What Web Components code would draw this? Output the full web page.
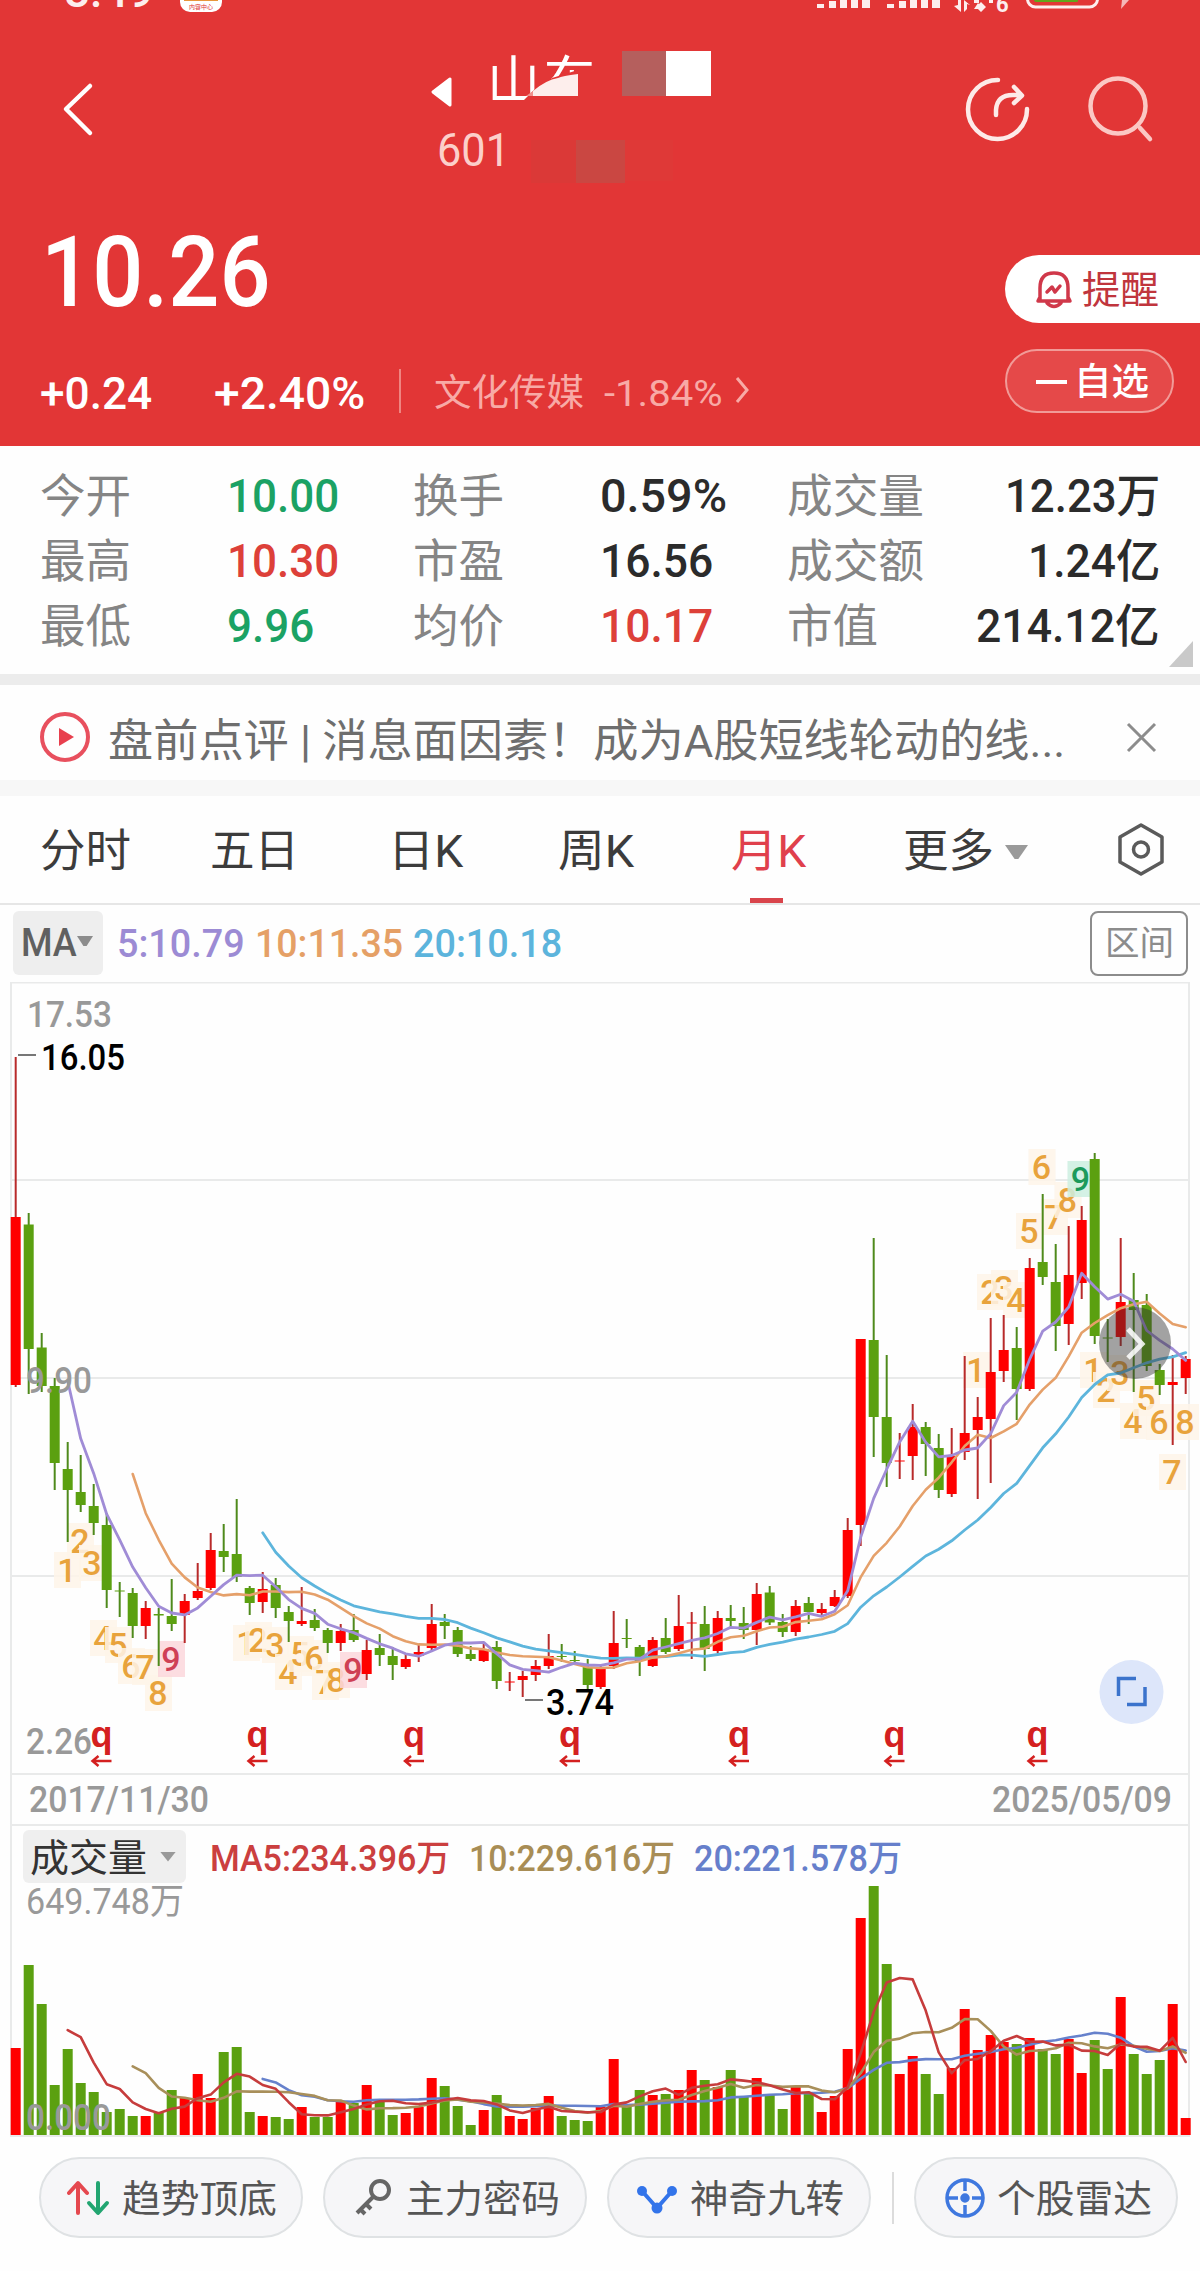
<!DOCTYPE html>
<html lang="zh-CN">
<head>
<meta charset="utf-8">
<title>个股行情</title>
<style>
  body {
    margin: 0;
    width: 1200px;
    height: 2271px;
    overflow: hidden;
    background: #fefefe;
    color: #2b2b2b;
    font-family: Roboto, "Noto Sans CJK SC", sans-serif;
  }
</style>
</head>
<body>

<quote-header>
  <fit-text slot="price" w="230">10.26</fit-text>
  <fit-text slot="change" w="112">+0.24</fit-text>
  <fit-text slot="percent" w="151">+2.40%</fit-text>
  <fit-text slot="sector" w="150">文化传媒</fit-text>
  <fit-text slot="sector-change" w="118">-1.84%</fit-text>
</quote-header>

<stat-grid>
  <fit-text w="91">今开</fit-text><fit-text w="112" class="down">10.00</fit-text>
  <fit-text w="91">换手</fit-text><fit-text w="127" class="num">0.59%</fit-text>
  <fit-text w="137">成交量</fit-text><fit-text w="155" class="num">12.23万</fit-text>
  <fit-text w="91">最高</fit-text><fit-text w="112" class="up">10.30</fit-text>
  <fit-text w="91">市盈</fit-text><fit-text w="113" class="num">16.56</fit-text>
  <fit-text w="137">成交额</fit-text><fit-text w="132" class="num">1.24亿</fit-text>
  <fit-text w="91">最低</fit-text><fit-text w="87" class="down">9.96</fit-text>
  <fit-text w="91">均价</fit-text><fit-text w="113" class="up">10.17</fit-text>
  <fit-text w="91">市值</fit-text><fit-text w="184" class="num">214.12亿</fit-text>
</stat-grid>

<news-bar><fit-text w="957">盘前点评 | 消息面因素！成为A股短线轮动的线...</fit-text></news-bar>

<period-tabs>
  <fit-text w="91">分时</fit-text>
  <fit-text w="89">五日</fit-text>
  <fit-text w="75">日K</fit-text>
  <fit-text w="76">周K</fit-text>
  <fit-text w="75" class="active">月K</fit-text>
  <fit-text w="91">更多</fit-text>
</period-tabs>

<ma-legend>
  <fit-text slot="name" w="56">MA</fit-text>
  <fit-text w="128" style="color:#9c8bd4">5:10.79</fit-text>
  <fit-text w="148" style="color:#e5a066">10:11.35</fit-text>
  <fit-text w="149" style="color:#5cb4dc">20:10.18</fit-text>
  <fit-text slot="range" w="69">区间</fit-text>
</ma-legend>

<kline-chart start="2017/11/30" end="2025/05/09"></kline-chart>

<volume-chart>
  <fit-text slot="name" w="117">成交量</fit-text>
  <fit-text w="240" style="color:#cb3f3f">MA5:234.396万</fit-text>
  <fit-text w="206" style="color:#a88d55">10:229.616万</fit-text>
  <fit-text w="208" style="color:#667fcb">20:221.578万</fit-text>
</volume-chart>

<tool-row>
  <tool-chip icon="trend"><fit-text w="155">趋势顶底</fit-text></tool-chip>
  <tool-chip icon="key"><fit-text w="154">主力密码</fit-text></tool-chip>
  <tool-chip icon="nodes"><fit-text w="154">神奇九转</fit-text></tool-chip>
  <tool-chip icon="radar" slot="pinned"><fit-text w="155">个股雷达</fit-text></tool-chip>
</tool-row>

<script>
function define(name, html, setup) {
  const template = document.createElement("template");
  template.innerHTML = html;
  customElements.define(name, class extends HTMLElement {
    constructor() {
      super();
      this.attachShadow({ mode: "open" });
      this.shadowRoot.appendChild(template.content.cloneNode(true));
    }
    connectedCallback() {
      if (setup) setup(this, this.shadowRoot);
    }
  });
}

/* one row per month: up/down, high, body top, body bottom, low, volume top (canvas y) */
const months = [
  ["r",1057,1217,1385,1387,2048],["g",1213,1224.5,1349,1394,1965],["g",1333,1347.5,1386,1392,2004],
  ["g",1378,1386,1463,1490,2085],["g",1442,1469,1490,1542,2049],["g",1455,1492,1505,1512,2083],
  ["g",1484,1506,1523,1535,2092],["g",1513,1525,1590,1608,2112],["g",1582,1590.5,1591.5,1617,2109],
  ["g",1588,1593,1626,1638,2116],["r",1601,1608,1626,1639,2116],["g",1608,1614,1615.5,1666,2113],
  ["g",1579,1616,1624,1631,2090],["r",1594,1601,1615,1643,2098],["r",1563,1591,1598,1600,2074],
  ["r",1533,1550,1588,1590,2098],["g",1524,1551,1557,1572,2052],["g",1499,1554,1577,1582,2047],
  ["g",1586,1588,1603,1615,2112],["r",1572,1589,1602,1613,2116],["g",1578,1585,1608,1618,2117],
  ["g",1606,1612,1621,1642,2119],["r",1587,1621,1624,1626,2107],["g",1609,1620,1628,1631,2117],
  ["g",1628,1630,1643,1653,2117],["r",1624,1631,1643,1651,2101],["g",1614,1630,1640,1642,2103],
  ["r",1640,1650,1674,1680,2085],["g",1634,1648,1655,1666,2100],["g",1647,1656,1665,1680,2115],
  ["r",1653,1659,1667,1669,2113],["r",1645,1652,1656,1662,2107],["r",1604,1624,1648,1652,2078],
  ["g",1614,1622,1626,1639,2086],["g",1627,1630,1654,1657,2106],["g",1646,1654,1659,1661,2125],
  ["r",1642,1649,1661,1662,2110],["g",1641,1647,1681,1689,2095],["r",1672,1681.5,1682.5,1691,2116],
  ["r",1671,1676,1680,1697,2119],["r",1660,1666,1675,1681,2108],["r",1634,1656,1666,1669,2096],
  ["g",1644,1656,1657,1662,2116],["g",1651,1660,1661,1665,2120],["g",1659,1667,1685,1689,2121],
  ["r",1666,1668,1687,1689,2107],["r",1611,1643,1666,1669,2059],["g",1619,1638,1639,1648,2105],
  ["g",1645,1647,1661,1676,2090],["r",1637,1640,1666,1667,2095],["g",1618,1638,1652,1654,2094],
  ["r",1595,1626,1649,1651,2090],["r",1612,1622.5,1623.5,1659,2070],["g",1606,1624,1649,1671,2080],
  ["r",1611,1618,1651,1653,2087],["g",1605,1618,1621,1629,2070],["g",1607,1623,1630,1639,2096],
  ["r",1583,1594,1630,1645,2078],["g",1586,1592.5,1622.5,1625,2095],["g",1614,1622,1632,1637,2109],
  ["r",1600,1606,1632,1636,2087],["g",1597,1603,1612,1624,2092],["r",1603,1609,1613,1617,2112],
  ["r",1590,1597,1606,1607,2096],["r",1518,1530,1596,1598,2049],["r",1339,1339,1525,1546,1918],
  ["g",1238,1340,1417,1457,1885],["g",1355,1417,1463,1487,1964],["r",1433,1460.5,1461.5,1479,2074],
  ["r",1404,1427,1456,1480,2056],["g",1422,1427,1444,1476,2074],["g",1434,1448,1490,1498,2094],
  ["r",1428,1456,1494,1497,2068],["r",1356,1433,1452,1460,2009],["r",1397,1417,1430,1499,2050],
  ["r",1318,1372,1419,1483,2035],["r",1315,1350,1371,1382,2042],["g",1327,1348,1389,1420,2044],
  ["r",1258,1268,1389,1391,2038],["g",1194,1262,1277,1285,2049],["g",1244,1282,1326,1351,2054],
  ["r",1226,1275,1324,1345,2039],["r",1206,1220,1283,1299,2073],["g",1153,1159,1336,1344,2040],
  ["g",1319,1337.5,1338.5,1362,2069],["r",1238,1302,1337,1346,1997],["g",1273,1300,1310,1392,2054],
  ["g",1294,1305,1366,1371,2074],["g",1364,1370,1385,1395,2060],["r",1355,1382,1385,1445,2004],
  ["r",1356,1359,1378,1394,2118]
];

/* nine-turn counters: digit, centre x, centre y, optional highlight */
const counters = [
  [1,67,1570],[2,80,1541],[3,92,1563],[4,103,1638],[5,118,1645],[6,131,1666],[7,145,1667],[8,158,1693],[9,171,1659,"buy"],
  [1,246,1643],[2,258,1640],[3,275,1645],[4,288,1672],[5,300,1654],[6,314,1658],[7,325,1682],[8,336,1680],[9,353,1670,"buy"],
  [1,976,1370],[2,990,1292],[3,1004,1288],[4,1016,1300],[5,1029,1231],[6,1041.5,1167],[7,1054,1217],[8,1067.5,1200],[9,1080.5,1179,"sell"],
  [1,1093,1370],[2,1106,1390],[3,1120,1373],[4,1133,1421],[5,1146,1398],[6,1159,1422],[7,1172,1472],[8,1185,1422]
];

const cx = i => +(15.7 + i * 13).toFixed(1);

function average(values, n, color, width = 2.6) {
  const points = [];
  for (let i = n - 1; i < values.length; i++) {
    const sum = values.slice(i - n + 1, i + 1).reduce((a, b) => a + b, 0);
    points.push(`${cx(i)},${(sum / n).toFixed(1)}`);
  }
  return `<polyline points="${points.join(" ")}" fill="none" stroke="${color}" stroke-width="${width}" stroke-linejoin="round" stroke-linecap="round"/>`;
}

function label(text, x, baseline, width, extra = "") {
  return `<text x="${x}" y="${baseline}" textLength="${width}" lengthAdjust="spacingAndGlyphs" ${extra}>${text}</text>`;
}

define("status-bar", `
  <style>
    :host { display: block; height: 13px; }
    svg { display: block; }
  </style>
  <svg width="1200" height="13" fill="#fdeeee">
    <text x="64" y="7" font-size="46" font-weight="500" textLength="90" lengthAdjust="spacingAndGlyphs">8:49</text>
    <rect x="180" y="-28" width="42" height="40" rx="10" fill="#fff"/>
    <rect x="184" y="-6" width="34" height="7" fill="#e8963c"/>
    <text x="189" y="9" font-size="6" fill="#d33" textLength="24">内容中心</text>
    <g>
      <path d="M817 4h7v4h-7zM829 1h7v7h-7zM840 0h7v8h-7zM851 0h7v8h-7zM862 0h8v8h-8z"/>
      <path d="M887 4h7v4h-7zM899 1h7v7h-7zM910 0h7v8h-7zM921 0h7v8h-7zM932 0h8v8h-8z"/>
      <path d="M954 6l7 6V0h-3v5zM964 0v12l3-3V4l3 1zM974 0h5v3h-5zM974 9l4-6 4 5zM989 0h4v3h-4zM976 7l5-5 5 5-5 5z"/>
      <text x="996" y="12" font-size="22" font-weight="700">6</text>
    </g>
    <rect x="1027.500" y="-22" width="70" height="29" rx="8" fill="none" stroke="#fdeeee" stroke-width="3"/>
    <path d="M1034 0h44v1q0 1-2 1h-39q-3 0-3-2z" fill="#62a41b"/>
    <path d="M1121 9l8-9h-7z" opacity=".7"/>
  </svg>
`);

define("quote-header", `
  <style>
    :host { display: block; height: 446px; background: #e23636; color: #fff; overflow: hidden; }
    svg { display: block; flex: none; }
    .nav { display: grid; grid-template-columns: 420px 500px 280px; height: 187px; }
    .price { display: flex; justify-content: space-between; height: 142px; padding-left: 41px; }
    slot[name=price] { font-size: 99px; line-height: 145px; font-weight: 500; }
    .pill {
      box-sizing: border-box; display: flex; align-items: center;
      font-weight: 500; line-height: 64px;
    }
    .remind { width: 195px; height: 68px; margin-top: 55px; padding: 1px 0 0 30px; gap: 9px;
      border-radius: 34px 0 0 34px; background: #fff; color: #c0353d; font-size: 38px; font-weight: 400; }
    .change { display: flex; height: 104px; padding: 0 26px 0 40px; line-height: 51px; font-size: 45px; font-weight: 500; }
    .text { padding-top: 26px; }
    .percent { margin-left: 62px; }
    .rule { width: 2px; height: 44px; margin: 27px 33px 0 34px; background: #ef8581; }
    .sector { display: flex; gap: 20px; padding-top: 26px; color: #f8aaa6; font-size: 37px; font-weight: 400; }
    .sector svg { margin: 7px 0 0 -8px; }
    .own { width: 169px; height: 64px; margin: 7px 0 0 auto; padding-left: 29px; gap: 7px;
      border: 2px solid #f19b98; border-radius: 33px; background: #e54949; font-size: 37px; }
    .own i { width: 31px; height: 4px; margin-top: 2px; background: #fff; }
    .own fit-text { padding-top: 3px; }
  </style>
  <status-bar></status-bar>
  <div class="nav">
    <svg width="420" height="187" viewBox="0 13 420 187" fill="none" stroke="#fff" stroke-width="4.500" stroke-linecap="round" stroke-linejoin="round">
      <path d="M90 86L66 109L90 133"/>
    </svg>
    <svg width="500" height="187" viewBox="420 13 500 187">
      <path d="M433 92L450 79V105Z" fill="#fff" stroke="#fff" stroke-width="3" stroke-linejoin="round"/>
      <text x="487" y="100" font-size="53" textLength="109" fill="#fff" font-weight="400">山东</text>
      <path d="M519 105L535 89L552 78L578 70H600V112H519Z" fill="#e23636"/>
      <path d="M533 96V91Q546 80 558 78Q562 76 578 74V96Z" fill="#fdeeec"/>
      <path d="M526 96L533 91V96Z" fill="#f0908c"/>
      <rect x="622" y="51" width="45" height="45" fill="#b55f5d"/>
      <rect x="666" y="51" width="45" height="45" fill="#fff"/>
      <text x="437" y="166" font-size="47" textLength="73" lengthAdjust="spacingAndGlyphs" fill="#fccfca">601</text>
      <rect x="531" y="140" width="45" height="43" fill="#db3937"/>
      <rect x="576" y="140" width="49" height="43" fill="#ca4742"/>
      <rect x="625" y="140" width="48" height="41" fill="#df3937"/>
    </svg>
    <svg width="280" height="187" viewBox="920 13 280 187" fill="none" stroke="#fdeae8" stroke-width="4.500" stroke-linecap="round" stroke-linejoin="round">
      <path d="M998 80A29.500 29.500 0 1 0 1027 109"/>
      <path d="M996 115V110Q997 95 1013 95H1021M1014 87L1022 95.500L1014 103"/>
      <g stroke="#fbc8c4"><circle cx="1118" cy="106" r="27.500"/><path d="M1140 128L1150 139"/></g>
    </svg>
  </div>
  <div class="price">
    <slot name="price"></slot>
    <div class="pill remind">
      <svg width="38" height="40" fill="none" stroke="#d0384a" stroke-width="3.500" stroke-linejoin="round" stroke-linecap="round">
        <path d="M5 31V18Q5 3 19 3T33 18V31M3 31H35M5 27L3 31M33 27L35 31M12 33Q19 40 26 33M12 22L17 17L20 22L25 16"/>
      </svg>
      <fit-text w="77">提醒</fit-text>
    </div>
  </div>
  <div class="change">
    <div class="text"><slot name="change"></slot></div>
    <div class="text percent"><slot name="percent"></slot></div>
    <div class="rule"></div>
    <div class="sector">
      <slot name="sector"></slot><slot name="sector-change"></slot>
      <svg width="17" height="30" fill="none" stroke="#f8aaa6" stroke-width="3"><path d="M3 3L13 15L3 27"/></svg>
    </div>
    <div class="pill own"><i></i><fit-text w="75">自选</fit-text></div>
  </div>
`);

define("stat-grid", `
  <style>
    :host {
      display: grid; box-sizing: border-box; height: 239px;
      grid-template-columns: 187px 186px 187px 187px 140px 1fr; grid-auto-rows: 65px;
      padding: 18px 40px 0 40px; border-bottom: 11px solid #ececec;
      font-size: 46px; line-height: 65px; color: #858585;
    }
    ::slotted(.num) { color: #2b2b2b; }
    ::slotted(.up) { color: #dd4039; }
    ::slotted(.down) { color: #1ba264; }
    ::slotted(:nth-child(even)) { font-weight: 500; }
    ::slotted(:nth-child(6n)) { justify-self: end; }
    i { grid-column: 6; justify-self: end; width: 24px; height: 26px; margin: -18px -33px 0 0;
      background: #c9c9c9; clip-path: polygon(100% 0, 100% 100%, 0 100%); }
  </style>
  <slot></slot><i></i>
`);

define("news-bar", `
  <style>
    :host {
      display: flex; align-items: center; box-sizing: border-box; height: 111px;
      padding: 9px 43px 0 39px; border-bottom: 16px solid #f7f7f7;
      font-size: 45px; color: #6e6e6e;
    }
    slot { display: block; margin-left: 17px; }
    .close { margin-left: auto; }
  </style>
  <svg width="52" height="56"><circle cx="26" cy="28" r="23" fill="none" stroke="#e8505e" stroke-width="4"/><path d="M20 19V37L35 28Z" fill="#e8404e"/></svg>
  <slot></slot>
  <svg class="close" width="31" height="31" stroke="#8c8c8c" stroke-width="3"><path d="M2 2L29 29M29 2L2 29"/></svg>
`);

define("period-tabs", `
  <style>
    :host {
      display: grid; grid-template-columns: 170px 178px 170px 173px 172px 102px 109px 1fr; align-items: start;
      box-sizing: border-box; height: 109px; padding-left: 40px; border-bottom: 2px solid #e6e6e6;
      font-size: 45px; line-height: 112px; color: #3c3c3c;
    }
    ::slotted(.active) { color: #e0404c; height: 107px; background: linear-gradient(#d9444b, #d9444b) no-repeat 19px 102px / 33px 5px; }
    i { width: 23px; height: 14px; margin-top: 49px; background: #9a9a9a; clip-path: polygon(0 0, 100% 0, 58% 100%, 42% 100%); }
    svg { margin: 26px 0 0 2px; }
  </style>
  <slot></slot><i></i>
  <svg width="50" height="56" fill="none" stroke="#5a5a5a" stroke-width="3.500" stroke-linejoin="round">
    <path d="M25 3L46 15V40L25 52L4 40V15Z"/><circle cx="25" cy="27.500" r="7.500"/>
  </svg>
`);

define("ma-legend", `
  <style>
    :host { display: flex; align-items: center; box-sizing: border-box; height: 77px; padding: 0 12px 1px 13px; font-size: 38px; font-weight: 500; }
    .name { display: flex; align-items: center; width: 82px; height: 64px; padding-left: 8px; border-radius: 6px; background: #eee; color: #606060; }
    i { width: 16px; height: 10px; margin-top: -4px; background: #8c8c8c; clip-path: polygon(0 0, 100% 0, 60% 100%, 40% 100%); }
    .values { display: flex; gap: 10px; margin: 1px 0 0 14px; }
    .range { display: flex; align-items: center; justify-content: center; box-sizing: border-box; width: 98px; height: 65px; margin-left: auto;
      padding-bottom: 5px; border: 2px solid #8c8c8c; border-radius: 8px; color: #8c8c8c; font-size: 34px; font-weight: 400; }
  </style>
  <div class="name"><slot name="name"></slot><i></i></div>
  <div class="values"><slot></slot></div>
  <div class="range"><slot name="range"></slot></div>
`);

define("kline-chart", `
  <style>
    :host { display: block; height: 844px; }
    svg { display: block; }
    .g { fill: #5ba010; stroke: #5ba010; }
    .r { fill: #ff0000; stroke: #ff0000; }
    .wick.g { stroke: #4f8a1c; }
    .wick.r { stroke: #b82a2a; }
  </style>
  <svg width="1200" height="844" viewBox="0 982 1200 844" font-size="36" font-weight="500" fill="#999"></svg>
`, (host, root) => {
  let out = `<path d="M11 1826V982.500H1189V1826M11 1180H1189M11 1378H1189M11 1576H1189M11 1774H1189M11 1825H1189" fill="none" stroke="#e9eaea" stroke-width="2"/>`;
  for (const [n, x, y, kind] of counters) {
    const fill = kind === "buy" ? "#fcd7dc" : kind === "sell" ? "#cdeee1" : "#fef5e9";
    const color = kind === "buy" ? "#cf4055" : kind === "sell" ? "#1c9a5c" : "#e8a33c";
    out += `<rect x="${x - 13}" y="${y - 18}" width="27" height="36" fill="${fill}" opacity=".85"/>`;
    out += `<text x="${x}" y="${y + 12}" text-anchor="middle" font-size="34" fill="${color}">${n}</text>`;
  }
  months.forEach(([c, high, top, bottom, low], i) => {
    out += `<path class="wick ${c}" d="M${cx(i)} ${high}V${low}" stroke-width="2"/>`;
    out += `<rect class="${c}" x="${cx(i) - 5}" y="${top}" width="10" height="${bottom - top}" stroke-width="0"/>`;
  });
  const closes = months.map(m => m[0] === "r" ? m[2] : m[3]);
  out += average(closes, 20, "#5db5dc", 2.8) + average(closes, 10, "#e5a06a", 2.6) + average(closes, 5, "#a08cd6", 2.8);
  out += label("17.53", 27, 1027, 85) + label("9.90", 26, 1393, 66) + label("2.26", 26, 1754, 66);
  out += label("16.05", 41, 1070, 84, `fill="#000"`) + label("3.74", 546, 1715, 68, `fill="#000"`);
  out += `<path d="M18 1055H36M525 1700H543" stroke="#777" stroke-width="2"/>`;
  out += label(host.getAttribute("start"), 29, 1812, 180) + label(host.getAttribute("end"), 992, 1812, 180);
  for (const x of [101.5, 257.5, 414, 570, 739, 894.5, 1037.5]) {
    out += `<text x="${x}" y="1747" text-anchor="middle" font-family="Liberation Sans" font-weight="700" fill="#d42020">q</text>`;
    out += `<path d="M${x + 10} 1761H${x - 8}M${x - 3} 1756L${x - 9} 1761L${x - 3} 1766" fill="none" stroke="#d42020" stroke-width="2.500"/>`;
  }
  out += `<circle cx="1135" cy="1343" r="36" fill="#333" opacity=".45"/>
    <path d="M1128 1329L1142 1344L1128 1358" fill="none" stroke="#fff" stroke-width="5" opacity=".85"/>
    <circle cx="1131.500" cy="1692" r="32" fill="#dde6fa"/>
    <path d="M1118.500 1696V1678.500H1136M1127 1704.500H1145V1687" fill="none" stroke="#3b73cc" stroke-width="3.500"/>`;
  root.querySelector("svg").innerHTML = out;
});

define("volume-chart", `
  <style>
    :host { display: block; height: 312px; }
    .head { display: flex; align-items: center; height: 59px; margin: 0 10px; padding: 1px 0 0 11px; border: solid #e9eaea; border-width: 0 2px; font-size: 36px; }
    .name { display: flex; align-items: center; box-sizing: border-box; width: 163px; height: 53px; padding: 0 0 4px 7px; margin-right: 24px; border-radius: 6px; background: #efefef; color: #333; font-size: 38px; }
    i { width: 16px; height: 10px; margin: 4px 0 0 13px; background: #999; clip-path: polygon(0 0, 100% 0, 50% 100%); }
    .values { display: flex; gap: 19px; padding-bottom: 4px; font-weight: 500; }
    svg { display: block; }
  </style>
  <div class="head">
    <div class="name"><slot name="name"></slot><i></i></div>
    <div class="values"><slot></slot></div>
  </div>
  <svg width="1200" height="252" viewBox="0 1886 1200 252" font-size="36" fill="#999"></svg>
`, (host, root) => {
  let out = `<path d="M11 1886V2136H1189V1886" fill="none" stroke="#e9eaea" stroke-width="2"/>`;
  months.forEach((m, i) => {
    out += `<rect x="${cx(i) - 5}" y="${m[5]}" width="10" height="${2135 - m[5]}" fill="${m[0] === "r" ? "#ff0000" : "#5ba010"}"/>`;
  });
  const tops = months.map(m => m[5]);
  out += average(tops, 20, "#6681cc") + average(tops, 10, "#a88f5a") + average(tops, 5, "#c63c3c");
  out += label("649.748万", 26, 1914, 158) + label("0.000", 26, 2130, 85, `font-weight="500"`);
  root.querySelector("svg").innerHTML = out;
});

const icons = {
  trend: `<g fill="none" stroke-width="4" stroke-linecap="round" stroke-linejoin="round"><path d="M11 35V6M2 15L11 5L20 15" stroke="#e5484f"/><path d="M31 5V34M22 25L31 35L40 25" stroke="#22a571"/></g>`,
  key: `<g fill="none" stroke="#666" stroke-width="4"><circle cx="29" cy="12" r="9"/><path d="M22 19L6 35M15 26L20 31M9 31L14 36"/></g>`,
  nodes: `<g fill="#3374ea"><path d="M7 13L22 30L37 13" fill="none" stroke="#3374ea" stroke-width="4"/><circle cx="7" cy="13" r="5"/><circle cx="37" cy="13" r="5"/><circle cx="22" cy="30" r="5.500"/></g>`,
  radar: `<g fill="none" stroke="#3f78df" stroke-width="3.500"><circle cx="23" cy="20" r="18"/><path d="M23 2V13M23 27V38M5 20H16M30 20H41"/><circle cx="23" cy="20" r="3" fill="#3f78df"/></g>`
};

define("tool-chip", `
  <style>
    :host {
      display: flex; align-items: center; box-sizing: border-box; width: 264px; height: 81px; padding-left: 26px;
      border: 2px solid #dfe2e4; border-radius: 41px; background: #f6f6f8; color: #555; font-size: 38px;
    }
    svg { flex: none; margin-right: 12px; }
    slot { display: block; padding-bottom: 5px; }
  </style>
  <svg width="43" height="40"></svg><slot></slot>
`, (host, root) => {
  root.querySelector("svg").innerHTML = icons[host.getAttribute("icon")];
});

define("tool-row", `
  <style>
    :host { display: flex; align-items: center; gap: 20px; box-sizing: border-box; height: 119px; padding: 0 21px 0 39px; }
    i { width: 2px; height: 52px; margin-left: 1px; background: #dcdcdc; }
  </style>
  <slot></slot><i></i><slot name="pinned"></slot>
`);

/* squeezes or stretches one line of text to the given width */
define("fit-text", `
  <style>
    :host { display: block; flex: none; white-space: nowrap; }
    span { display: inline-block; transform-origin: 0 50%; }
  </style>
  <span><slot></slot></span>
`, (host, root) => {
  const span = root.querySelector("span");
  const width = Number(host.getAttribute("w"));
  const natural = span.offsetWidth;
  host.style.width = width + "px";
  if (natural) span.style.transform = `scaleX(${width / natural})`;
});
</script>
</body>
</html>
